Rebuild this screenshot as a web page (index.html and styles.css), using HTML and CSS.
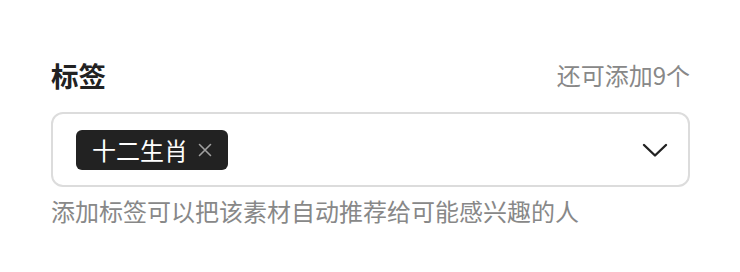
FILE: index.html
```html
<!DOCTYPE html>
<html lang="zh-CN">
<head>
<meta charset="utf-8">
<link rel="stylesheet" href="styles.css">
</head>
<body>
<div class="field">
  <div class="field-head">
    <span class="field-title">标签</span>
    <span class="field-count">还可添加9个</span>
  </div>
  <div class="select">
    <div class="tags">
      <span class="tag">十二生肖<svg class="tag-close" width="14" height="14" viewBox="0 0 14 14"><path d="M1.5 1.5 L12.5 12.5 M12.5 1.5 L1.5 12.5" stroke="#a0a0a0" stroke-width="1.6" stroke-linecap="round"/></svg></span>
    </div>
    <svg class="chevron" width="26" height="16" viewBox="0 0 26 16"><path d="M2 3 L13 13.5 L24 3" fill="none" stroke="#222" stroke-width="2.4" stroke-linecap="round" stroke-linejoin="round"/></svg>
  </div>
  <div class="field-help">添加标签可以把该素材自动推荐给可能感兴趣的人</div>
</div>
</body>
</html>
```

FILE: styles.css
```css
html, body {
  margin: 0;
  padding: 0;
  background: #fff;
}
body {
  font-family: "Noto Sans CJK SC", "Noto Sans", sans-serif;
  width: 740px;
  height: 272px;
}
.field {
  padding: 58px 50px 0 51px;
}
.field-head {
  display: flex;
  justify-content: space-between;
  align-items: center;
  height: 36px;
}
.field-title {
  font-size: 27.5px;
  line-height: 36px;
  font-weight: 700;
  color: #222;
  margin-top: -3px;
}
.field-count {
  font-size: 24px;
  line-height: 36px;
  color: #888;
  margin-top: -3px;
}
.select {
  margin-top: 18px;
  border: 2px solid #dcdcdc;
  border-radius: 12px;
  box-sizing: border-box;
  height: 75px;
  display: flex;
  align-items: center;
  justify-content: space-between;
  padding: 0 20px 0 23px;
}
.tag {
  display: inline-flex;
  align-items: center;
  height: 40px;
  padding: 0 16px 0 16px;
  background: #222;
  color: #fff;
  border-radius: 6px;
  font-size: 24px;
  line-height: 40px;
}
.tag-close {
  margin-left: 10px;
  display: block;
}
.chevron {
  display: block;
}
.field-help {
  margin-top: 9px;
  font-size: 24px;
  line-height: 30px;
  color: #888;
}
```
